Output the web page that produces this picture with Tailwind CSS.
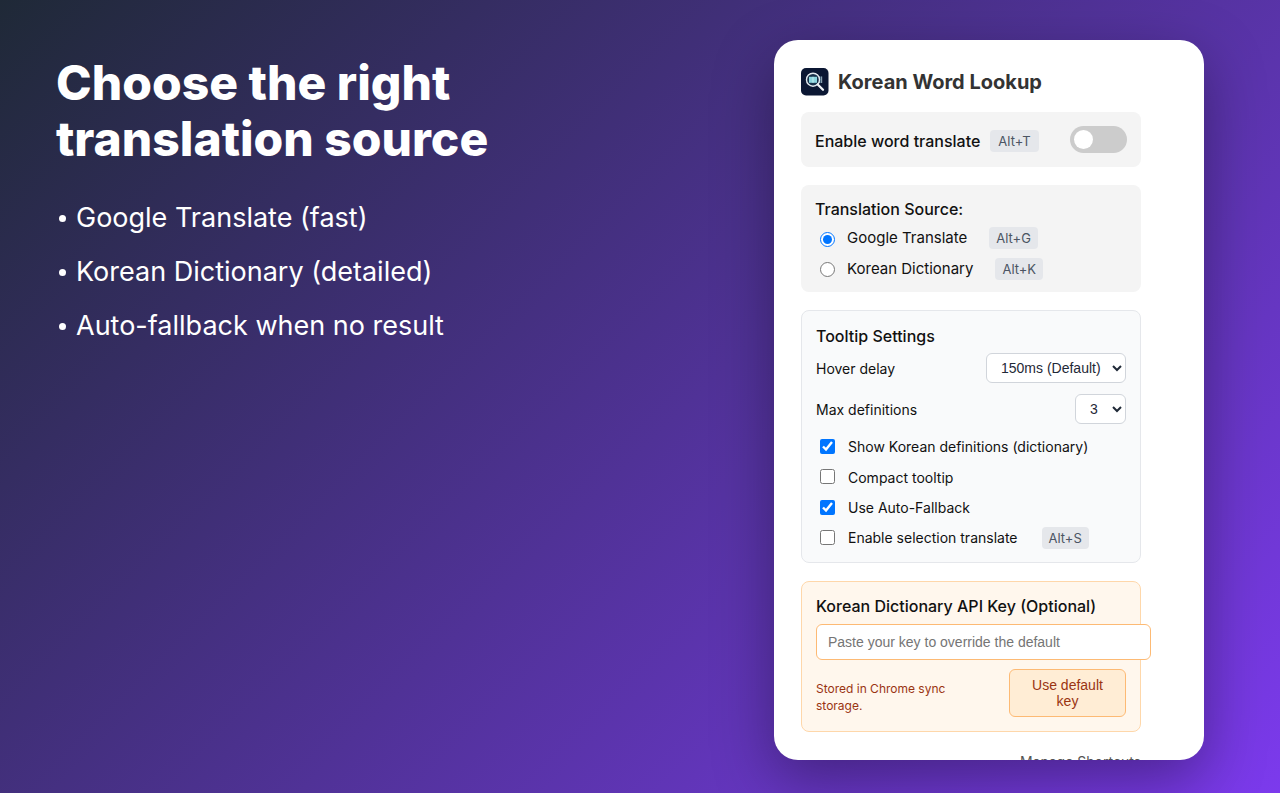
<!DOCTYPE html>
<html lang="en">
<head>
<meta charset="utf-8">
<title>Korean Word Lookup</title>
<script src="https://cdn.jsdelivr.net/npm/@tailwindcss/browser@4"></script>
</head>
<body class="bg-white font-[Inter,sans-serif]">
<main class="flex h-[calc(100vh-7px)] items-start justify-between overflow-hidden bg-[linear-gradient(135deg,#1f2937,#7c3aed)] pt-10 pr-[76px] pl-14">
  <section class="pt-[15px] text-white">
    <h1 class="text-[48px] leading-14 font-extrabold">Choose the right<br>translation source</h1>
    <ul class="mt-[31px] flex flex-col gap-[14px] text-[27px] leading-10">
      <li class="flex items-center gap-[10px]"><span class="ml-[3px] size-[7px] rounded-full bg-white"></span>Google Translate (fast)</li>
      <li class="flex items-center gap-[10px]"><span class="ml-[3px] size-[7px] rounded-full bg-white"></span>Korean Dictionary (detailed)</li>
      <li class="flex items-center gap-[10px]"><span class="ml-[3px] size-[7px] rounded-full bg-white"></span>Auto-fallback when no result</li>
    </ul>
  </section>

  <section class="h-[calc(100vh-80px)] w-[430px] shrink-0 overflow-hidden rounded-3xl bg-white pt-[27px] pr-[63px] pl-[27px] text-[15px] leading-5 text-[#111] shadow-[0_20px_60px_rgba(0,0,0,0.35)]">
    <header class="flex items-center gap-[9px]">
      <svg class="size-7" viewBox="0 0 28 28" fill="none" aria-hidden="true">
        <rect width="27.500" height="27.500" rx="5" fill="#0b1733"/>
        <path d="M17 8.500h4v6.500h-4" fill="#3f5c75"/>
        <path d="M18.300 8.500V15M20.700 8.500V15" stroke="#b4c6d2" stroke-width=".8"/>
        <circle cx="12" cy="11.700" r="6.500" fill="#17304a" stroke="#e3e9ef" stroke-width="1.400"/>
        <rect x="8" y="8.800" width="8" height="6" fill="#8bd5df"/>
        <path d="M12 8.800v6" stroke="#c4eef0" stroke-width="1"/>
        <path d="m16.700 16.500 5.300 5.200" stroke="#f0f3f6" stroke-width="2.300" stroke-linecap="round"/>
      </svg>
      <h2 class="pt-px text-xl leading-7 font-bold text-[#333]">Korean Word Lookup</h2>
    </header>

    <div class="mt-4 flex h-[55px] items-center rounded-lg bg-[#f4f4f4] px-[14px]">
      <label for="enable" class="pt-[2px] text-base leading-5 font-medium">Enable word translate</label>
      <kbd class="mt-[2px] ml-[10px] rounded bg-[#e5e7eb] px-2 font-[Inter,sans-serif] text-[13px] leading-[22px] text-[#4b5563]">Alt+T</kbd>
      <input id="enable" type="checkbox" class="ml-auto h-[27px] w-[57px] appearance-none rounded-full bg-[#ccc] p-1 before:block before:size-[19px] before:rounded-full before:bg-white">
    </div>

    <fieldset class="mt-[18px] h-[107px] rounded-lg bg-[#f4f4f4] px-[14px] pt-[14px]">
      <legend class="float-left w-full text-base leading-5 font-medium">Translation Source:</legend>
      <div class="clear-both flex h-[30px] items-center pt-[8px]">
        <input id="google" type="radio" name="source" checked class="mt-[2px] mr-3 ml-[5px] size-[15px]">
        <label for="google">Google Translate</label>
        <kbd class="ml-[22px] rounded bg-[#e5e7eb] px-[7px] font-[Inter,sans-serif] text-[13px] leading-[22px] text-[#4b5563]">Alt+G</kbd>
      </div>
      <div class="flex h-[31px] items-center pt-[8px]">
        <input id="korean" type="radio" name="source" class="mt-[2px] mr-3 ml-[5px] size-[15px]">
        <label for="korean">Korean Dictionary</label>
        <kbd class="ml-[22px] rounded bg-[#e5e7eb] px-[7px] font-[Inter,sans-serif] text-[13px] leading-[22px] text-[#4b5563]">Alt+K</kbd>
      </div>
    </fieldset>

    <div class="mt-[18px] h-[253px] rounded-lg border border-[#e5e7eb] bg-[#f9fafb] px-[14px] pt-[15px]">
      <h3 class="text-base leading-5 font-medium">Tooltip Settings</h3>
      <div class="mt-[7px] flex h-[30px] items-center justify-between">
        <label for="delay" class="pt-px text-sm">Hover delay</label>
        <select id="delay" class="h-[30px] w-[140px] rounded-md border border-[#d1d5db] bg-white pl-[10px] font-[Liberation_Sans,sans-serif] text-sm text-[#1f2937]"><option>150ms (Default)</option></select>
      </div>
      <div class="mt-[11px] flex h-[30px] items-center justify-between">
        <label for="max" class="pt-px text-sm">Max definitions</label>
        <select id="max" class="h-[30px] w-[51px] rounded-md border border-[#d1d5db] bg-white pl-[10px] font-[Liberation_Sans,sans-serif] text-sm text-[#1f2937]"><option>3</option></select>
      </div>
      <div class="mt-2 flex h-[30px] items-center text-sm">
        <input id="show" type="checkbox" checked class="mr-[13px] mb-[2px] ml-1 size-[15px]"><label for="show">Show Korean definitions (dictionary)</label>
      </div>
      <div class="flex h-[31px] items-center text-sm">
        <input id="compact" type="checkbox" class="mr-[13px] mb-[2px] ml-1 size-[15px]"><label for="compact">Compact tooltip</label>
      </div>
      <div class="flex h-[30px] items-center text-sm">
        <input id="fallback" type="checkbox" checked class="mr-[13px] mb-[2px] ml-1 size-[15px]"><label for="fallback">Use Auto-Fallback</label>
      </div>
      <div class="flex h-[30px] items-center text-sm">
        <input id="selection" type="checkbox" class="mr-[13px] mb-[2px] ml-1 size-[15px]"><label for="selection">Enable selection translate</label>
        <kbd class="ml-6 rounded bg-[#e5e7eb] px-[7px] font-[Inter,sans-serif] text-[13px] leading-[22px] text-[#4b5563]">Alt+S</kbd>
      </div>
    </div>

    <div class="mt-[18px] h-[151px] rounded-lg border border-[#fed7aa] bg-[#fff7ed] px-[14px] pt-[14px]">
      <label for="key" class="block text-base leading-5 font-medium">Korean Dictionary API Key (Optional)</label>
      <input id="key" type="text" placeholder="Paste your key to override the default" class="mt-2 block h-9 w-[335px] rounded-md border border-[#fdba74] bg-white px-[11px] font-[Liberation_Sans,sans-serif] text-sm placeholder:text-[#757575]">
      <div class="mt-[9px] flex items-center justify-between">
        <p class="w-[160px] pt-2 text-xs leading-[17px] text-[#9a3412]">Stored in Chrome sync storage.</p>
        <button type="button" class="h-12 w-[117px] rounded-md border border-[#fdba74] bg-[#ffedd5] px-3 font-[Liberation_Sans,sans-serif] text-sm leading-4 text-[#9a3412]">Use default key</button>
      </div>
    </div>

    <div class="mt-5 text-right text-sm"><a href="#" class="text-[#555]">Manage Shortcuts</a></div>
  </section>
</main>
</body>
</html>
